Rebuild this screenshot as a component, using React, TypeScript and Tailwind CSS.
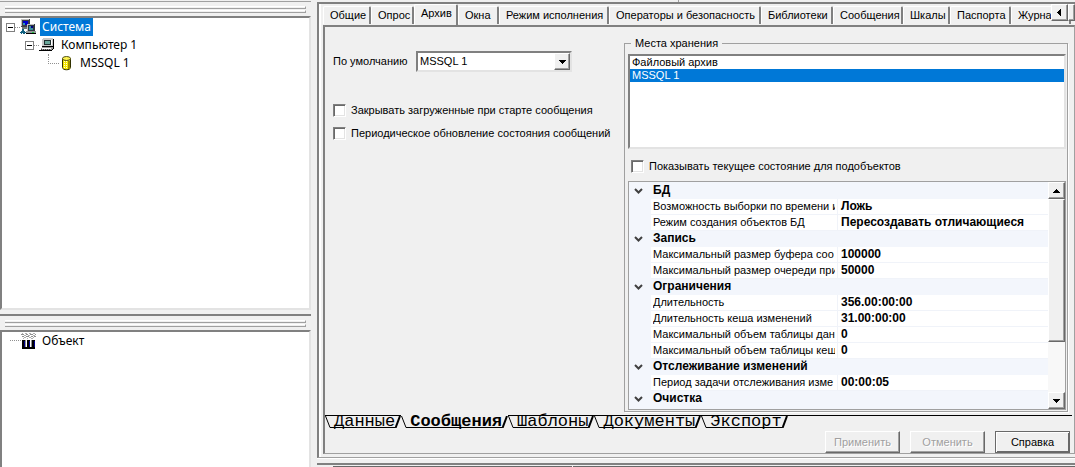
import { ReactNode, useState } from 'react';

const sheetTabs = ['Данные', 'Сообщения', 'Шаблоны', 'Документы', 'Экспорт'];

const pageTabs = [
    { title: 'Общие', width: 'w-[48px]' },
    { title: 'Опрос', width: 'w-[43px]' },
    { title: 'Архив', width: 'w-[44px]' },
    { title: 'Окна', width: 'w-[41px]' },
    { title: 'Режим исполнения', width: 'w-[110px]' },
    { title: 'Операторы и безопасность', width: 'w-[152px]' },
    { title: 'Библиотеки', width: 'w-[72px]' },
    { title: 'Сообщения', width: 'w-[70px]' },
    { title: 'Шкалы', width: 'w-[47px]' },
    { title: 'Паспорта', width: 'w-[61px]' },
    { title: 'Журна', width: 'w-[60px]' },
];

const properties = [
    {
        category: 'БД',
        items: [
            ['Возможность выборки по времени и', 'Ложь'],
            ['Режим создания объектов БД', 'Пересоздавать отличающиеся'],
        ],
    },
    {
        category: 'Запись',
        items: [
            ['Максимальный размер буфера соо', '100000'],
            ['Максимальный размер очереди при', '50000'],
        ],
    },
    {
        category: 'Ограничения',
        items: [
            ['Длительность', '356.00:00:00'],
            ['Длительность кеша изменений', '31.00:00:00'],
            ['Максимальный объем таблицы дан', '0'],
            ['Максимальный объем таблицы кеш', '0'],
        ],
    },
    {
        category: 'Отслеживание изменений',
        items: [['Период задачи отслеживания изме', '00:00:05']],
    },
    { category: 'Очистка', items: [] },
];

const sunken = 'border-2 border-t-[#808080] border-l-[#808080] border-r-[#e3e3e3] border-b-[#e3e3e3]';
const raised = 'bg-[#f0f0f0] border border-t-white border-l-white border-r-[#696969] border-b-[#696969] shadow-[inset_-1px_-1px_0_#a0a0a0]';

function Arrow({ dir }: { dir: 'up' | 'down' | 'left' }) {
    const points = {
        up: 'M3 0h1v1h1v1h1v1h1v1H0V3h1V2h1V1h1z',
        down: 'M0 0h7v1H6v1H5v1H4v1H3V3H2V2H1V1H0z',
        left: 'M4 0v7H3V6H2V5H1V4H0V3h1V2h1V1h1V0z',
    };
    return (
        <svg width="7" height="7" viewBox={dir === 'left' ? '-1 0 7 7' : '0 -2 7 7'} shapeRendering="crispEdges">
            <path d={points[dir]} />
        </svg>
    );
}

function Grip() {
    return (
        <div className="mx-[5px] flex flex-col gap-px pt-[4px] pb-[3px]">
            <div className="h-[3px] border-r border-b border-[#a0a0a0] border-t border-t-white" />
            <div className="h-[3px] border-r border-b border-[#a0a0a0] border-t border-t-white" />
        </div>
    );
}

function Expander() {
    return (
        <svg width="9" height="9" shapeRendering="crispEdges" className="shrink-0">
            <rect x="0.5" y="0.5" width="8" height="8" fill="#fff" stroke="#808080" />
            <path d="M2 4h5v1H2z" />
        </svg>
    );
}

function NetworkIcon() {
    return (
        <svg width="16" height="16" shapeRendering="crispEdges" className="shrink-0">
            <path d="M1 0h9v8H1z" fill="#404048" />
            <path d="M1 0h8v1H2v6H1z" fill="#c0c0c0" />
            <path d="M3 2h5v4H3z" fill="#0000d0" />
            <path d="M3 4h2v2H3z" fill="#2f9bb0" />
            <path d="M2 8h6v2H2z" fill="#707a78" />
            <path d="M7 5h8v7H7z" fill="#303840" />
            <path d="M7 5h7v1H8v6H7z" fill="#c0c0c0" />
            <path d="M9 7h4v4H9z" fill="#3a8da0" />
            <path d="M11 7h2v2h-2z" fill="#000080" />
            <path d="M6 12h10v3H6z" fill="#909898" />
            <path d="M6 14h10v1H6z" />
            <path d="M12 13h2v1h-2z" fill="#20c040" />
            <path d="M2 10h2v3H2zM0 13h5v1H0zM1 12h1v3H1zM3 12h2v3H3zM5 13h1v1H5z" fill="#106080" />
        </svg>
    );
}

function ComputerIcon() {
    return (
        <svg width="16" height="16" shapeRendering="crispEdges" className="shrink-0">
            <path d="M4 1h10v9H3V2h1z" fill="#c8c8c8" />
            <path d="M14 2h1v8h-1zM3 9h11v1H3z" />
            <path d="M5 3h7v5H5z" fill="#203030" />
            <path d="M6 4h5v3H6z" fill="#6aa79a" />
            <path d="M12 3h1v5h-1z" fill="#fff" />
            <path d="M3 10h12v1h-1v2H2v-2h1z" fill="#a0a0a0" />
            <path d="M3 11h9v1H2v1H1v-1h2z" fill="#fff" />
            <path d="M1 13h12v1H0v-1zM13 12h1v1h-1zM14 10h1v2h-1z" />
            <path d="M2 12h1v1H2zM4 12h1v1H4zM6 12h1v1H6zM8 12h1v1H8zM10 12h1v1h-1z" fill="#404040" />
        </svg>
    );
}

function DatabaseIcon() {
    return (
        <svg width="16" height="16" className="shrink-0">
            <path d="M3.5 3.5v9c0 3 8 3 8 0v-9z" fill="#f4e600" stroke="#303000" />
            <ellipse cx="7.5" cy="3.5" rx="4" ry="2" fill="#fff450" stroke="#505018" />
            <path d="M5.5 6v8M7.5 6v8" stroke="#fffde0" strokeDasharray="1 1" />
            <path d="M10 6v8" stroke="#a09000" strokeWidth="2" />
        </svg>
    );
}

function ObjectIcon() {
    return (
        <svg width="16" height="16" shapeRendering="crispEdges" className="shrink-0">
            <path d="M0 1.5h3M5 1.5h2M9 1.5h3M14 1.5h1M1 3.5h2M5 3.5h3M10 3.5h2M13 3.5h2" stroke="#909090" />
            <path d="M1 .5h1M4 .5h2M8 .5h2M12 .5h2M3 2.5h2M7 2.5h2M12 2.5h2M3 4.5h2M8 4.5h2M12 4.5h1M2 5.5h1M6 5.5h1M10 5.5h2" stroke="#b0b0b0" />
            <path d="M1 7h3v8H1zM6 7h3v8H6zM11 7h3v8h-3zM1 14h13v2H1z" />
            <path d="M3 8h1v6H3zM8 8h1v6H8zM13 8h1v6h-1z" fill="#000090" />
            <path d="M4 7h1v7H4zM10 7h1v7h-1z" fill="#909090" />
        </svg>
    );
}

function Dots({ className }: { className: string }) {
    return <span className={`border-dotted border-[#909090] shrink-0 ${className}`} />;
}

function CheckBox({ children }: { children: ReactNode }) {
    return (
        <label className="flex items-center gap-[5px] h-[15px] whitespace-nowrap">
            <input
                type="checkbox"
                className="appearance-none size-[13px] shrink-0 bg-white border border-[#808080] border-r-white border-b-white shadow-[inset_1px_1px_0_#696969,inset_-1px_-1px_0_#e3e3e3] checked:bg-[#0078d7]"
            />
            {children}
        </label>
    );
}

function LeftPane() {
    return (
        <aside className="w-[311px] shrink-0 h-full flex flex-col font-['Noto_Sans',sans-serif] text-[12px] leading-[18px]">
            <div className="h-[2px] border-b border-[#a0a0a0]" />
            <Grip />
            <div className={`flex-[293] min-h-0 bg-white ${sunken}`}>
                <ul role="tree">
                    <li role="treeitem" aria-expanded="true" className="flex items-center h-[18px] pl-1">
                        <Expander />
                        <Dots className="w-[5px] border-t" />
                        <NetworkIcon />
                        <span className="ml-1 bg-[#0078d7] text-white px-[2px] h-[18px]">Система</span>
                    </li>
                    <li role="treeitem" aria-expanded="true" className="flex items-center h-[18px] pl-[23px]">
                        <Expander />
                        <Dots className="w-[5px] border-t" />
                        <ComputerIcon />
                        <span className="pl-[6px]">Компьютер 1</span>
                    </li>
                    <li role="treeitem" className="flex items-center h-[18px] pl-[46px]">
                        <Dots className="self-start w-[11px] h-[10px] border-l border-b" />
                        <DatabaseIcon />
                        <span className="pl-[5px]">MSSQL 1</span>
                    </li>
                </ul>
            </div>
            <div className="h-[6px] border-b-2 border-[#808080]" />
            <Grip />
            <div className="flex-[137] min-h-0 bg-white border-2 border-b-0 border-t-[#808080] border-l-[#808080] border-r-[#e3e3e3]">
                <ul role="tree">
                    <li role="treeitem" className="flex items-center h-[18px] pl-2">
                        <Dots className="w-[11px] border-t" />
                        <ObjectIcon />
                        <span className="pl-[5px]">Объект</span>
                    </li>
                </ul>
            </div>
        </aside>
    );
}

function PropertyGrid() {
    return (
        <div className="flex-1 min-h-0 flex bg-[#f3f6fc] border border-[#a0a0a0] overflow-hidden">
            <div className="flex-1 min-w-0 pt-px overflow-hidden">
                <table className="w-full table-fixed border-separate border-spacing-0 text-left leading-[15px]">
                    <colgroup>
                        <col className="w-[22px]" />
                        <col className="w-[187px]" />
                        <col />
                    </colgroup>
                    {properties.map((group) => (
                        <tbody key={group.category}>
                            <tr className="h-[16px]">
                                <td className="p-0 pl-[5px]">
                                    <svg width="9" height="6" fill="none" stroke="#404040" strokeWidth="2">
                                        <path d="M1 1l3.5 3.5L8 1" />
                                    </svg>
                                </td>
                                <th colSpan={2} className="p-0 pl-[2px] pb-px font-bold text-[12px]">
                                    {group.category}
                                </th>
                            </tr>
                            {group.items.map(([name, value]) => (
                                <tr key={name} className="h-[16px]">
                                    <td className="p-0" />
                                    <td className="p-0 px-[2px] bg-white border-b border-r border-[#f0f3f9]">
                                        <div className="overflow-hidden whitespace-nowrap">{name}</div>
                                    </td>
                                    <td className="p-0 pl-[3px] bg-white border-b border-[#f0f3f9] font-bold text-[12px] whitespace-nowrap">
                                        {value}
                                    </td>
                                </tr>
                            ))}
                        </tbody>
                    ))}
                </table>
            </div>
            <div className="w-[17px] shrink-0 flex flex-col bg-[#f8f8f8]">
                <button aria-label="Вверх" className={`h-[17px] flex items-center justify-center ${raised}`}>
                    <Arrow dir="up" />
                </button>
                <div className={`flex-[142] ${raised}`} />
                <div className="flex-[51]" />
                <button aria-label="Вниз" className={`h-[17px] flex items-center justify-center ${raised}`}>
                    <Arrow dir="down" />
                </button>
            </div>
        </div>
    );
}

function SheetTabs() {
    const [active, setActive] = useState('Сообщения');
    return (
        <div className="flex h-[13px] mr-[2px] font-['Liberation_Mono',monospace] text-[17px] leading-[11px]">
            {sheetTabs.map((title) => (
                <button
                    key={title}
                    onClick={() => setActive(title)}
                    className={`flex h-[13px] border-t ${title === active ? 'border-transparent font-bold' : 'border-black'}`}
                >
                    <svg width="9" height="12" stroke="#000" className="shrink-0">
                        <path d="M.5 0L5 11.5H9" fill="none" />
                    </svg>
                    <span className="h-[12px] border-b border-black">{title}</span>
                    <svg width="6" height="12" stroke="#000" className="shrink-0">
                        <path d="M.5 12L5 0" strokeWidth="2" />
                    </svg>
                </button>
            ))}
            <div className="flex-1 border-t border-black" />
        </div>
    );
}

export default function App() {
    const [page, setPage] = useState('Архив');
    const [storage, setStorage] = useState('MSSQL 1');

    return (
        <div className="h-screen flex gap-[6px] overflow-hidden bg-[#f0f0f0] text-black font-['Liberation_Sans',Arial,sans-serif] text-[11px] leading-[13px]">
            <LeftPane />
            <main className="flex-1 min-w-0 flex flex-col">
                <div className="h-[2px] shrink-0 flex">
                    <div className="w-[362px] border-r border-[#a0a0a0]" />
                </div>
                <div className="flex-1 min-h-0 flex flex-col border-t-2 border-l-2 border-[#808080] border-b border-b-[#a0a0a0]">
                    <div className="flex-1 min-h-0 flex flex-col pl-[2px] pb-[3px] border-l-2 border-white">
                        <div className="flex h-[21px] shrink-0 items-end relative overflow-hidden">
                            {pageTabs.map((tab) => (
                                <button
                                    key={tab.title}
                                    onClick={() => setPage(tab.title)}
                                    className={`${tab.width} shrink-0 whitespace-nowrap text-left border-t border-l border-white border-r-2 border-r-[#808080] rounded-t-[2px] ${
                                        tab.title === page ? 'h-[21px] pl-[6px] pb-[3px]' : 'h-[18px] pl-[6px] mb-px'
                                    }`}
                                >
                                    {tab.title}
                                </button>
                            ))}
                            <div className="absolute right-0 top-0 flex bg-[#f0f0f0]">
                                <button aria-label="Назад" className={`w-[17px] h-[17px] flex items-center justify-center ${raised}`}>
                                    <Arrow dir="left" />
                                </button>
                                <div className={`w-[7px] h-[17px] ${raised}`} />
                            </div>
                        </div>
                        <div className="flex-1 min-h-0 flex flex-col border-t-2 border-l-2 border-[#808080] border-b border-b-[#a0a0a0] border-r border-r-[#a0a0a0]">
                            <div className="flex-1 min-h-0 flex pt-[10px] pr-[6px] pb-[3px]">
                                <section className="w-[299px] shrink-0 pl-[8px] pt-[14px]">
                                    <div className="flex items-center">
                                        <label htmlFor="default-storage" className="w-[83px]">По умолчанию</label>
                                        <div className="relative w-[156px]">
                                            <select
                                                id="default-storage"
                                                value={storage}
                                                onChange={(e) => setStorage(e.target.value)}
                                                className={`block appearance-none w-full h-[21px] pl-[2px] bg-white ${sunken}`}
                                            >
                                                <option>MSSQL 1</option>
                                                <option>Файловый архив</option>
                                            </select>
                                            <span className={`absolute right-[2px] top-[2px] w-[16px] h-[17px] flex items-center justify-center pointer-events-none ${raised}`}>
                                                <Arrow dir="down" />
                                            </span>
                                        </div>
                                    </div>
                                    <div className="mt-[31px] flex flex-col gap-[8px]">
                                        <CheckBox>Закрывать загруженные при старте сообщения</CheckBox>
                                        <CheckBox>Периодическое обновление состояния сообщений</CheckBox>
                                    </div>
                                </section>
                                <fieldset className="flex-1 min-w-0 min-h-0 flex flex-col border border-[#a0a0a0] pl-[3px] pr-px pb-px shadow-[1px_1px_0_#fff]">
                                    <legend className="ml-[3px] px-[4px]">Места хранения</legend>
                                    <ul role="listbox" aria-label="Места хранения" className={`mt-[4px] h-[95px] shrink-0 bg-white ${sunken}`}>
                                        <li role="option" aria-selected="false" className="h-[13px] pl-[2px]">Файловый архив</li>
                                        <li role="option" aria-selected="true" className="h-[13px] pl-[2px] bg-[#0078d7] text-white">MSSQL 1</li>
                                    </ul>
                                    <div className="pt-[10px] pb-[7px] pl-[3px]">
                                        <CheckBox>Показывать текущее состояние для подобъектов</CheckBox>
                                    </div>
                                    <PropertyGrid />
                                </fieldset>
                            </div>
                            <SheetTabs />
                            <div className="flex justify-end gap-[10px] pt-[3px] pr-[4px]">
                                <button disabled className={`w-[75px] h-[22px] text-[#a0a0a0] [text-shadow:1px_1px_0_#fff] ${raised}`}>
                                    Применить
                                </button>
                                <button disabled className={`w-[75px] h-[22px] text-[#a0a0a0] [text-shadow:1px_1px_0_#fff] ${raised}`}>
                                    Отменить
                                </button>
                                <button className="w-[75px] h-[22px] border border-[#696969] shadow-[inset_1px_1px_0_#fff,inset_-1px_-1px_0_#696969]">
                                    Справка
                                </button>
                            </div>
                        </div>
                    </div>
                </div>
                <div className="h-[5px] shrink-0 border-t border-white" />
                <div className="h-[4px] shrink-0 border-t-2 border-[#808080] pl-[16px] pt-px flex gap-px">
                    <div className="w-[239px] bg-[#696969]" />
                    <div className="flex-1 bg-[#696969]" />
                </div>
            </main>
        </div>
    );
}
